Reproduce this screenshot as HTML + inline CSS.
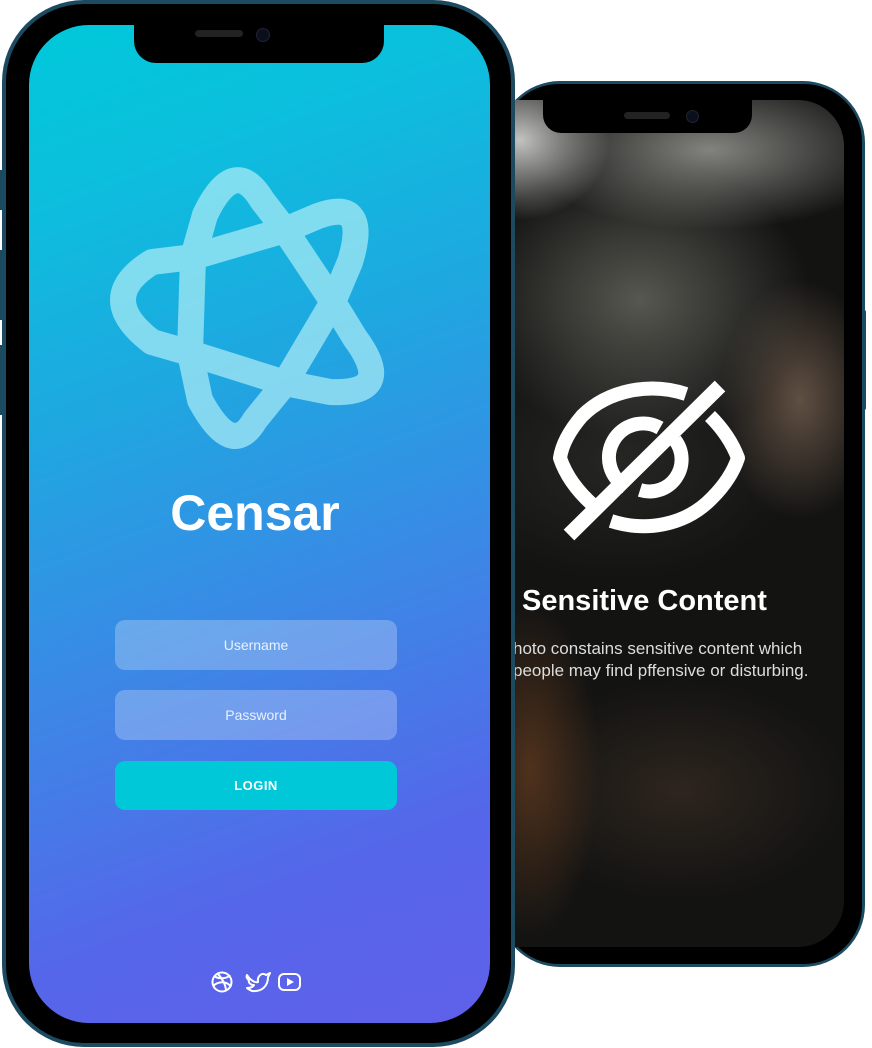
<!DOCTYPE html>
<html><head><meta charset="utf-8"><style>
html,body{margin:0;padding:0;background:#fff;width:872px;height:1048px;overflow:hidden;position:relative;font-family:"Liberation Sans",sans-serif}
.abs{position:absolute}
</style></head><body>

<!-- Right phone -->
<div class="abs" style="left:498px;top:81px;width:367px;height:886px;border-radius:62px;background:#1c4a60;"></div>
<div class="abs" style="left:862px;top:310px;width:4px;height:100px;background:#1c4a60;border-radius:2px"></div>
<div class="abs" style="left:501px;top:84px;width:361px;height:880px;border-radius:58px;background:#000;"></div>
<div class="abs" style="left:512px;top:100px;width:332px;height:847px;border-radius:0 46px 46px 0;overflow:hidden;">
 <div class="abs" style="left:-512px;top:-100px;width:872px;height:1048px;
 background:
 radial-gradient(ellipse 90px 80px at 520px 140px, rgba(225,225,222,0.85), rgba(225,225,222,0) 100%),
 radial-gradient(ellipse 190px 80px at 710px 150px, rgba(150,150,145,0.85), rgba(150,150,145,0) 100%),
 radial-gradient(ellipse 170px 140px at 640px 300px, rgba(95,95,88,0.9), rgba(95,95,88,0) 100%),
 radial-gradient(ellipse 80px 120px at 800px 400px, rgba(110,90,75,0.85), rgba(110,90,75,0) 100%),
 radial-gradient(ellipse 180px 120px at 620px 460px, rgba(40,40,38,0.9), rgba(40,40,38,0) 100%),
 radial-gradient(ellipse 70px 170px at 530px 770px, rgba(90,55,30,0.85), rgba(90,55,30,0) 100%),
 radial-gradient(ellipse 170px 110px at 680px 790px, rgba(50,40,32,0.85), rgba(50,40,32,0) 100%),
 #131312;"></div>
</div>
<div class="abs" style="left:543px;top:98px;width:209px;height:35px;background:#000;border-radius:0 0 18px 18px"></div>
<div class="abs" style="left:624px;top:112px;width:46px;height:7px;background:#222;border-radius:4px"></div>
<div class="abs" style="left:686px;top:110px;width:11px;height:11px;background:#0a0f1e;border-radius:50%;border:1px solid #223"></div>

<svg class="abs" style="left:0;top:0" width="872" height="1048">
 <g fill="none" stroke="#fff" stroke-width="14" stroke-linejoin="round">
  <path d="M611 521 C645 532 685 526 712 498 C726 484 734 470 738 458 C732 442 722 428 710 416"/>
  <path d="M686 394 C650 382 608 390 582 416 C570 430 562 444 560 458 C566 476 578 492 594 506"/>
  <path d="M626 487 A32 32 0 0 1 660 428 M675 440 A32 32 0 0 1 640 490"/>
 </g>
 <line x1="569" y1="535" x2="720" y2="386" stroke="#fff" stroke-width="15"/>
</svg>
<div class="abs" style="left:522px;top:585px;font-size:29px;font-weight:bold;color:#fff;white-space:nowrap">Sensitive Content</div>
<div class="abs" style="left:513px;top:638px;width:340px;font-size:17px;line-height:22px;color:#ddd;white-space:nowrap">hoto constains sensitive content which<br>people may find pffensive or disturbing.</div>

<!-- Left phone -->
<div class="abs" style="left:2px;top:0px;width:513px;height:1047px;border-radius:82px;background:#1c4a60;"></div>
<div class="abs" style="left:0px;top:170px;width:4px;height:40px;background:#1c4a60"></div>
<div class="abs" style="left:0px;top:250px;width:4px;height:70px;background:#1c4a60"></div>
<div class="abs" style="left:0px;top:345px;width:4px;height:70px;background:#1c4a60"></div>
<div class="abs" style="left:6px;top:4px;width:505px;height:1039px;border-radius:78px;background:#000;"></div>
<div class="abs" style="left:29px;top:25px;width:461px;height:998px;border-radius:60px;overflow:hidden;background:linear-gradient(160deg,#00c8da 0%,#0cbfdd 15%,#1ea8e0 35%,#3d86e6 60%,#5566ea 82%,#6060ea 100%);">
</div>
<div class="abs" style="left:134px;top:23px;width:250px;height:40px;background:#000;border-radius:0 0 22px 22px"></div>
<div class="abs" style="left:195px;top:30px;width:48px;height:7px;background:#222;border-radius:4px"></div>
<div class="abs" style="left:256px;top:28px;width:12px;height:12px;background:#0a0f1e;border-radius:50%;border:1px solid #223"></div>

<svg class="abs" style="left:0;top:0" width="520" height="1048">
 <path fill="none" stroke="rgba(170,235,245,0.72)" stroke-width="26" stroke-linejoin="round"
  d="M262 200 L285 230 L333 302 L355 338
     Q397 395 330 392
     L285 383 L190 353 L152 342
     Q94 298 152 262
     L193 257 L285 230 L318 216
     Q370 197 350 262
     L333 302 L285 383 L255 420
     Q232 460 200 400
     L190 353 L193 257 L205 215
     Q234 154 262 200Z"/>
 <g fill="none" stroke="#fff" stroke-width="2">
  <circle cx="222" cy="982" r="9.5"/>
  <path d="M214 976 C220 980 228 978 230 975 M213 986 C220 980 228 982 231 987 M217 973 C222 978 226 985 226 991"/>
  <path d="M247 975 C250 980 255 983 258 982 C257 976 262 972 266 975 L270 973 L268 977 C268 986 262 992 252 991 C250 990 248 989 247 988 C251 988 253 987 254 985 C250 985 248 982 249 980 C247 979 246 977 247 975Z" stroke-linejoin="round"/>
  <rect x="279" y="974" width="21" height="16" rx="5"/>
 </g>
 <path d="M287 978 L294 982 L287 986Z" fill="#fff"/>
</svg>

<div class="abs" style="left:29px;width:452px;top:484px;text-align:center;font-size:50px;font-weight:bold;color:#fff">Censar</div>

<div class="abs" style="left:115px;top:620px;width:282px;height:50px;border-radius:10px;background:rgba(255,255,255,0.25);color:#e8f2ff;font-size:14px;line-height:50px;text-align:center">Username</div>
<div class="abs" style="left:115px;top:690px;width:282px;height:50px;border-radius:10px;background:rgba(255,255,255,0.25);color:#e8f2ff;font-size:14px;line-height:50px;text-align:center">Password</div>
<div class="abs" style="left:115px;top:761px;width:282px;height:49px;border-radius:10px;background:#00c8d9;color:#fff;font-size:13px;font-weight:bold;line-height:49px;text-align:center;letter-spacing:0.5px">LOGIN</div>

</body></html>
